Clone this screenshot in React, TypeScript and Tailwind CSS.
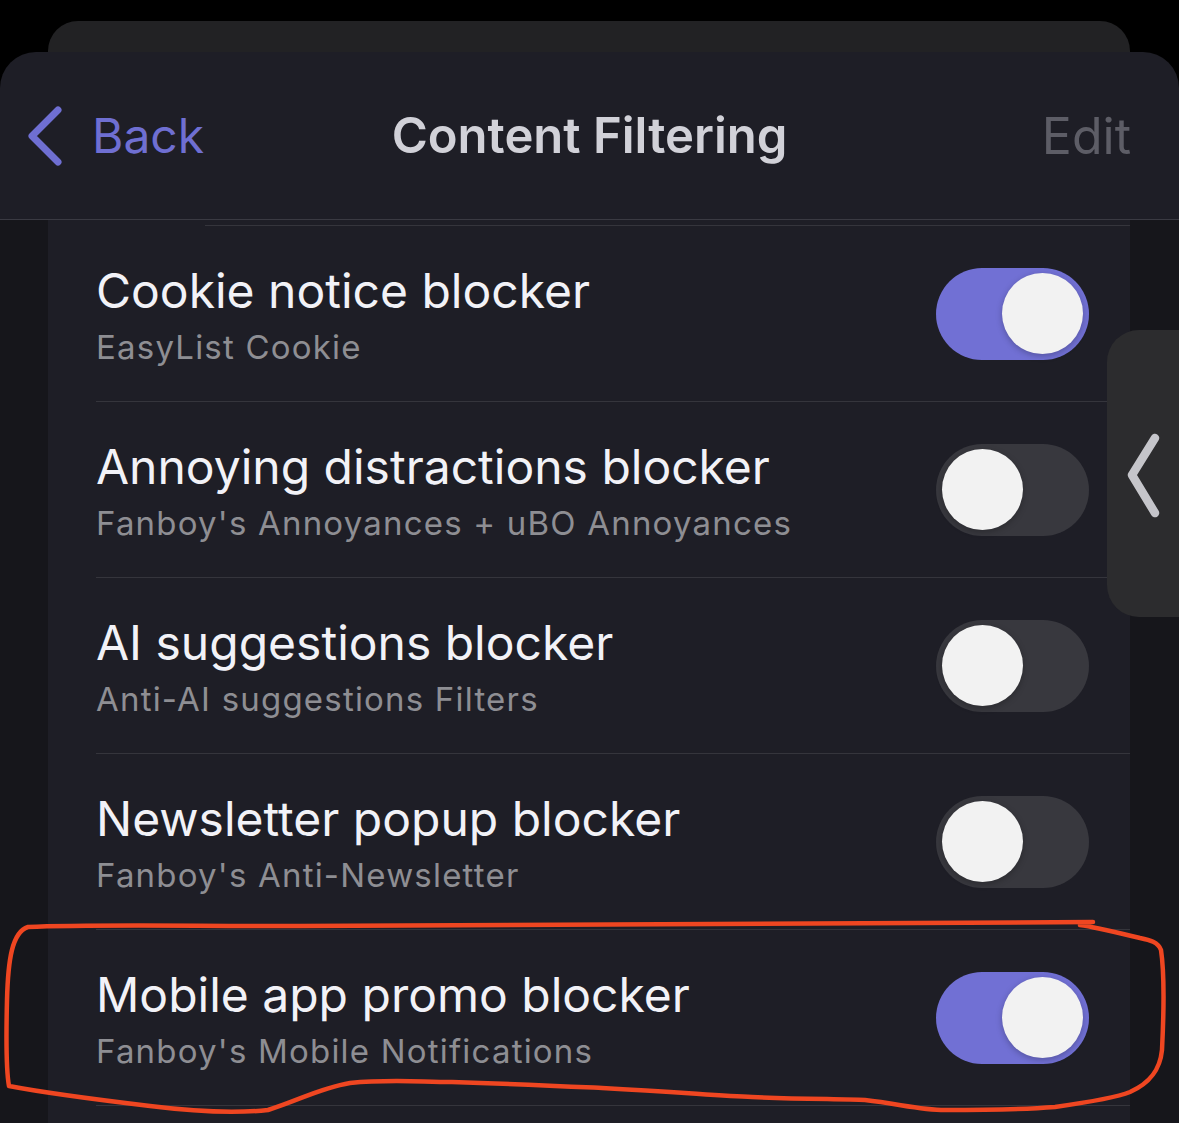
const filters = [
  { title: "Cookie notice blocker", source: "EasyList Cookie", on: true },
  { title: "Annoying distractions blocker", source: "Fanboy's Annoyances + uBO Annoyances", on: false },
  { title: "AI suggestions blocker", source: "Anti-AI suggestions Filters", on: false },
  { title: "Newsletter popup blocker", source: "Fanboy's Anti-Newsletter", on: false },
  { title: "Mobile app promo blocker", source: "Fanboy's Mobile Notifications", on: true },
];

function Toggle({ on }: { on: boolean }) {
  return (
    <div
      className={
        on
          ? "flex h-[92px] w-[153px] shrink-0 items-center justify-end rounded-full bg-[#7170d4] px-[6px]"
          : "flex h-[92px] w-[153px] shrink-0 items-center justify-start rounded-full bg-[#38383e] px-[6px]"
      }
    >
      <div className="h-[81px] w-[81px] rounded-full bg-[#f2f2f2] shadow-[0_2px_6px_rgba(0,0,0,0.25)]" />
    </div>
  );
}

function FilterRow({ title, source, on }: { title: string; source: string; on: boolean }) {
  return (
    <div className="ml-[48px] flex h-[176px] items-center justify-between border-b border-[#35353c] pr-[41px]">
      <div className="flex flex-col pt-[4px]">
        <span className="text-[48px] leading-[52px] text-[#f2f2f7]">{title}</span>
        <span className="mt-[10px] text-[33px] leading-[40px] tracking-[1.2px] text-[#8e8e93]">{source}</span>
      </div>
      <Toggle on={on} />
    </div>
  );
}

export default function App() {
  return (
    <div className="relative h-[1123px] w-[1179px] overflow-hidden bg-black font-[Inter,sans-serif]">
      <div className="h-[21px]" />
      <div className="ml-[48px] h-[31px] w-[1082px] rounded-t-[30px] bg-[#222224]" />

      <header className="grid h-[168px] grid-cols-[1fr_auto_1fr] items-center rounded-t-[36px] border-b border-[#3a3a42] bg-[#1e1e26]">
        <div className="flex items-center gap-[28px] pl-[26px] text-[#6f6fd2]">
          <svg width="38" height="60" viewBox="0 0 38 60" fill="none">
            <path d="M32 4 L6 30 L32 56" stroke="currentColor" strokeWidth="7" strokeLinecap="round" strokeLinejoin="round" />
          </svg>
          <span className="text-[48px] leading-none">Back</span>
        </div>
        <h1 className="text-[49px] font-semibold leading-none text-[#d1d1d8]">Content Filtering</h1>
        <div className="flex justify-end pr-[48px]">
          <span className="text-[50px] leading-none text-[#5d5d66]">Edit</span>
        </div>
      </header>

      <div className="flex h-[903px]">
        <div className="w-[48px] bg-[#16161b]" />
        <div className="w-[1082px] bg-[#1e1e26] pt-[5px]">
          <div className="ml-[157px] border-t border-[#35353c]" />
          {filters.map((f) => (
            <FilterRow key={f.title} {...f} />
          ))}
        </div>
        <div className="flex-1 bg-[#16161b]" />
      </div>

      {/* side panel handle */}
      <div className="absolute left-[1107px] top-[330px] flex h-[287px] w-[80px] items-start rounded-l-[32px] bg-[#2c2c2e]">
        <svg width="72" height="287" viewBox="0 0 72 287" fill="none">
          <path d="M48 108 L25 145 L48 183" stroke="#c5c5ca" strokeWidth="8.5" strokeLinecap="round" strokeLinejoin="round" />
        </svg>
      </div>

      {/* red annotation */}
      <svg className="pointer-events-none absolute left-0 top-0" width="1179" height="1123" viewBox="0 0 1179 1123" fill="none">
        <path
          d="M1093 922 C900 921 600 926 300 926 C180 926 90 924 28 927 C12 932 8 960 7 1000 C6 1040 6 1070 9 1086 C40 1092 100 1100 150 1106 C190 1111 230 1114 268 1110 C300 1100 320 1088 350 1083 C390 1079 420 1082 452 1082 C520 1084 560 1086 602 1088 C680 1092 720 1096 752 1097 C800 1099 840 1099 865 1100 C900 1104 920 1110 945 1110 C990 1110 1030 1109 1055 1107 C1090 1102 1115 1098 1130 1092 C1150 1083 1160 1070 1162 1050 C1164 1010 1164 970 1161 950 C1158 942 1150 940 1140 938 C1115 932 1095 927 1080 925"
          stroke="#ef4621"
          strokeWidth="4.5"
          strokeLinecap="round"
          strokeLinejoin="round"
        />
      </svg>
    </div>
  );
}
